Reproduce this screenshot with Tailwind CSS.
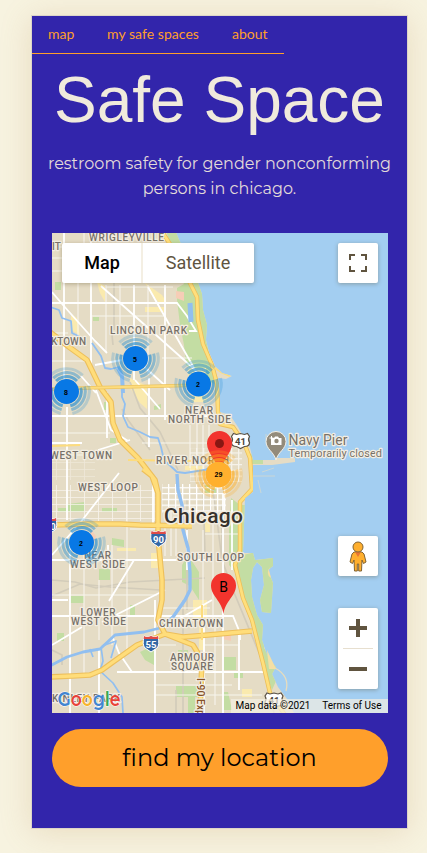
<!DOCTYPE html>
<html lang="en">
<head>
<meta charset="utf-8">
<meta name="viewport" content="width=device-width, initial-scale=1">
<title>Safe Space</title>
<script src="https://cdn.jsdelivr.net/npm/@tailwindcss/browser@4"></script>
</head>
<body class="h-[853px] overflow-hidden bg-[#f7f3e0] pl-8 pr-5 pt-4">
<main class="flex h-[812px] w-[375px] flex-col items-center bg-[#3225ab] shadow-[0_0_0_1px_#ddd5c8,0_3px_30px_rgba(190,140,80,0.24)]">
  <nav class="flex h-[38px] w-[252px] self-start whitespace-nowrap border-b border-[#ff9f2b] pl-4 font-['Lato',sans-serif] text-[14px] leading-[36px] text-[#ff9f2b]">
    <a class="w-[59px]">map</a><a class="w-[125px] tracking-[0.05px]">my safe spaces</a><a>about</a>
  </nav>
  <h1 class="mt-[9px] h-[73px] whitespace-nowrap font-['Liberation_Sans',sans-serif] text-[64px] leading-[74px] text-[#f0eadc]">Safe Space</h1>
  <p class="mt-[15px] h-[50px] whitespace-nowrap text-center font-['Montserrat','Inter',sans-serif] text-[16px] font-normal leading-[25px] text-[#e3dbd9]">restroom safety for gender nonconforming<br>persons in chicago.</p>

  <section class="relative mt-8 h-[480px] w-[336px] shrink-0 overflow-hidden bg-[#a3cef1]">
    <svg class="block h-[480px] w-[336px]" viewBox="52 233 336 480" font-family="Roboto, sans-serif">
      <defs>
        <path id="land" d="M50 230H175L180 242L190 258L197 280L202 294L203 310L207 325L206 340L209 352L215 366L222 373L232 376L226 379L218 378L220 395L220 412L230 415L238 427L244 438L250 448L253 460H275V458H295V462L272 465H253L253 492L245 498L243 553L253 553L255 560L273 558V566L268 570L273 583L271 613L262 612L260 600L264 585L262 567L257 562L253 568L251 580L252 597L257 615L263 625L262 640L266 652L270 660L276 667L272 674L278 687L287 699L294 713H50Z"/>
        <clipPath id="landclip"><use href="#land"/></clipPath>
        <pattern id="dense" width="7" height="5.8" patternUnits="userSpaceOnUse"><path d="M0 0H7M0 0V5.8" stroke="#fff" stroke-width="2.6" fill="none"/></pattern>
        <pattern id="fine" width="14" height="7" patternUnits="userSpaceOnUse"><path d="M0 0H14M0 0V7" stroke="#f7f3eb" stroke-width="1.7" fill="none"/></pattern>
        <g id="rings" fill="none" transform="rotate(-15)">
          <circle r="14.8" stroke-width="3" stroke-opacity=".68" pathLength="360" stroke-dasharray="90 30"/>
          <circle r="18.8" stroke-width="3" stroke-opacity=".46" pathLength="360" stroke-dasharray="90 30"/>
          <circle r="22.8" stroke-width="3" stroke-opacity=".24" pathLength="360" stroke-dasharray="90 30"/>
        </g>
        <g id="interstate">
          <path d="M-7-7Q-4-5 0-7Q4-5 7-7Q9 2 6 5Q3 7 0 9Q-3 7-6 5Q-9 2-7-7Z" fill="#3467a5" stroke="#fff" stroke-width="1"/>
          <path d="M-7-7Q-4-5 0-7Q4-5 7-7L7.4-4H-7.4Z" fill="#e04b47"/>
        </g>
        <path id="usshield" d="M-7-7L-4-6L0-7L4-6L7-7L9-4Q7-1 9 2Q9 6 4 6L0 8L-4 6Q-9 6-9 2Q-7-1-9-4Z" fill="#fff" stroke="#5a5145" stroke-width="1.2"/>
      </defs>
      <use href="#land" fill="#e5dcc5"/>
      <g clip-path="url(#landclip)">
        <g fill="#c3dda3">
          <path d="M166 230H176L190 258L203 294L208 325L206 340L212 365L217 386L206 379L186 365L184 345L180 325L177 300V288L184 284L174 260Z"/>
          <path d="M231 498L240 505H246L243 555L256 552L256 560L275 557V615H260L251 580L257 603L268 625L264 648L280 672L272 690L262 663L250 620L238 575L229 565V530Z"/>
          <path d="M182 565L188 555L199 572V600L190 586L182 582ZM205 485H216V493H205ZM224 657H236V670H224ZM228 692L232 710H224V692ZM178 650H188V662H178ZM176 686H203V697H176ZM188 697H195V713H188ZM234 672H243V678H234ZM247 455L263 452V464H252Z"/>
          <path d="M55 282H61V290H55ZM93 317H99V321H93ZM104 402H108V410H104ZM154 406L161 404V409L154 410ZM110 438H116V443H110ZM67 504L85 502V512H67ZM58 508H68V512H58ZM102 508H117V512H102ZM112 538L124 540V547L112 545ZM99 569H110V580H99ZM130 605H135V615H130ZM140 652L154 645V665L145 660ZM70 596H84V603H70ZM57 633H64V641H57Z"/>
        </g>
        <g fill="#faeaae">
          <path d="M71 314L77 318L80 335L71 330ZM97 282L105 286V302L100 293ZM145 283L162 295L167 303L160 304L149 290ZM130 378L147 386V409L140 403L130 388ZM145 307H164V312H145ZM188 368H206V376H188ZM192 396H207V402H192ZM72 540H81V543H72ZM117 548H136V551H117ZM151 553H160V568H151ZM193 600H207V618H193ZM242 689H252V697H242ZM199 623H204V650H199ZM204 512H210V532H204ZM188 660H199V667H188ZM185 466H203V470H185Z"/>
        </g>
        <g fill="#f6cdb6"><path d="M176 291L184 292V301L176 298ZM223 633L231 630V641L223 639ZM92 531L96 536L94 543L89 536Z"/></g>
        <g stroke="#d3ccba" fill="none" stroke-width="1.7">
          <path d="M112 335L113 345M130 382L140 408L160 432L178 470M122 409L128 420L150 450M210 470L217 520L222 560L233 590L262 660L274 713M52 580L75 582L96 588L130 582L205 578M52 596L80 584L110 587L160 590M222 505V560M203 483L205 555M52 650L62 655V665M183 600V713M176 690V713M114 245V330M187 500V610"/>
        </g>
        <path d="M52 485H157V521H52Z" fill="url(#fine)"/>
        <path d="M52 460H95V480H52Z" fill="url(#fine)" opacity=".5"/>
        <path d="M162 484H226V513H162Z" fill="url(#dense)"/>
        <path d="M190 448H242V482H190Z" fill="url(#dense)" opacity=".65"/>
        <g stroke="#f8f5ed" fill="none" stroke-width="1.1">
          <path d="M52 247H88M52 258H66M52 271H66M106 287H173M92 316H165M52 333H68M52 361H85M162 358H192M52 433H110M142 443H212M52 455H100M130 529H156M205 534H240M52 595H157M162 608H210M157 645H176M204 645H238M155 685H232M155 695H262"/>
          <path d="M84 233V280M78 258V345M106 285V352M120 285V332M148 285V375M84 530V675M99 580V640M112 545V645M127 500V650M165 528V556M171 508V556M176 528V556M190 425V468M197 422V470M203 425V470M209 425V470M203 530V630M213 500V620M215 620V705"/>
        </g>
        <g stroke="#fff" fill="none" stroke-width="1.8">
          <path d="M64 233V385M91 233V370M134 285V380M67 407V520M70 545V713M99 650V713M107 392V438M108 545V560M149 378L149 447M153 480V525M155 600V713M165 285V420M187 530V570M204 625V713M223 493V713M232 500V570M239 633V690"/>
          <path d="M52 303H177L187 316L196 331H189M52 416H221M52 560H205M52 616H157M157 616H233L240 633V640M117 672H263"/>
          <path d="M52 292L63 305L95 341L107 353M101 286L183 359L195 370L205 385M148 287L194 368M135 380L160 409M130 354L170 390M96 390L111 430L128 441M98 450L130 440M52 443H82M95 365L122 360M119 473L80 523L52 555M134 560L109 601M52 600H68M52 645L82 627M102 622L165 590M162 629L212 600M113 638L119 653L132 672M81 376L96 393"/>
        </g>
        <g stroke="#91bff0" fill="none" stroke-width="1.8" stroke-linejoin="round">
          <path d="M50 307L59 310L62 318L71 321L72 333L80 337M92 343L101 356L105 368L111 369L119 367L122 380V397L125 404L123 416L128 427L140 432L150 437L158 438L161 447L164 460L177 472L185 473L204 470L225 468"/>
          <path stroke-width="4" d="M118 368L122 376L123 393M206 470L225 468"/>
          <path stroke-width="3.4" d="M177 474L178 490L182 505L183 530L188 548L190 573L190 590L185 600L173 617L160 628"/>
          <path stroke-width="2.8" d="M160 628L144 632L115 635L100 649L83 652L67 657L50 666"/>
          <path stroke-width="1.7" d="M101 647L103 661L100 671L113 683L122 697L123 713M102 646L116 641L111 658M90 649L93 657"/>
          <path stroke-width="5" d="M190 303L191 322"/>
        </g>
        <g stroke-linejoin="round" fill="none">
          <path stroke="#edbf5b" stroke-width="5.6" d="M50 332L69 347L87 360L100 387L111 402L113 423L120 440L138 458L155 480L158 493V537L162 580V600L158 620L165 634L183 637L208 635L252 631M50 677L72 676L90 675L102 670L113 662L137 645L165 634L193 645L202 660L200 713M50 525L90 524L120 524L140 525L192 526M143 469L152 476L158 493"/>
          <path stroke="#ffdd7a" stroke-width="3.4" d="M50 332L69 347L87 360L100 387L111 402L113 423L120 440L138 458L155 480L158 493V537L162 580V600L158 620L165 634L183 637L208 635L252 631M50 677L72 676L90 675L102 670L113 662L137 645L165 634L193 645L202 660L200 713M50 525L90 524L120 524L140 525L192 526M143 469L152 476L158 493"/>
          <path stroke="#edbf5b" stroke-width="4.4" d="M163 233L178 257L190 283L197 297L198 320L203 344L212 365L217 384L218 411L220 424L233 427L244 443L250 458L252 489L240 502L240 550L235 565L243 598L252 620L263 663L270 693L285 715"/>
          <path stroke="#ffdf7c" stroke-width="2.8" d="M163 233L178 257L190 283L197 297L198 320L203 344L212 365L217 384L218 411L220 424L233 427L244 443L250 458L252 489L240 502L240 550L235 565L243 598L252 620L263 663L270 693L285 715"/>
          <path stroke="#edc45f" stroke-width="3.6" d="M52 389L84 388L203 385"/>
          <path stroke="#fddc7d" stroke-width="2" d="M52 389L84 388L203 385M202 605V640M128 460L194 461M212 366L221 372L230 376M52 446L80 445"/>
        </g>
      </g>
      <path d="M275 668Q290 676 286 691" fill="none" stroke="#e7dcbd" stroke-width="1.3"/>
      <path d="M267 650L276 669H269ZM270 567Q265 574 271 578L269 570Z" fill="#f4dfa4"/>
      <path d="M253 476H275M258 480L261 493M262 472L274 468M266 434V440" stroke="#d4d9cf" stroke-width=".8"/>

      <g fill="#777169" stroke="#f3ede1" stroke-width="2.4" stroke-linejoin="round" paint-order="stroke" font-size="10" font-weight="500">
        <text x="89" y="241" textLength="75">WRIGLEYVILLE</text>
        <text x="52" y="250">IT</text>
        <text x="110" y="334" textLength="77">LINCOLN PARK</text>
        <text x="51" y="344.500" textLength="35">KTOWN</text>
        <text x="185" y="413.500" textLength="28">NEAR</text>
        <text x="168" y="423" textLength="63">NORTH SIDE</text>
        <text x="50" y="458.500" textLength="62">WEST TOWN</text>
        <text x="156" y="463.500" textLength="73">RIVER NORTH</text>
        <text x="78" y="490.500" textLength="60">WEST LOOP</text>
        <text x="84" y="558.500" textLength="27">NEAR</text>
        <text x="70" y="568" textLength="55">WEST SIDE</text>
        <text x="177" y="561" textLength="67">SOUTH LOOP</text>
        <text x="80.500" y="615.500" textLength="35">LOWER</text>
        <text x="71" y="625" textLength="55">WEST SIDE</text>
        <text x="159" y="626.500" textLength="64">CHINATOWN</text>
        <text x="170" y="660.500" textLength="44">ARMOUR</text>
        <text x="171" y="670" textLength="42">SQUARE</text>
        <text x="52" y="701.500" textLength="68">KINLEY PARK</text>
        <text x="288.500" y="445" font-size="14" font-weight="400" textLength="59">Navy Pier</text>
        <text x="288.500" y="457" font-size="11" font-weight="400" textLength="93.500">Temporarily closed</text>
        <text x="164" y="523" font-size="21" fill="#37322d" stroke-width="3" textLength="79">Chicago</text>
        <text transform="translate(197 678) rotate(90)" font-size="10.500" fill="#855125" textLength="43">I-90 Expy</text>
      </g>
      <g font-weight="700" text-anchor="middle">
        <use href="#interstate" x="158.500" y="538"/><text x="158.500" y="542.500" fill="#fff" font-size="9.500">90</text>
        <use href="#interstate" x="151" y="643"/><text x="151" y="647.500" fill="#fff" font-size="9.500">55</text>
        <use href="#interstate" x="49" y="525"/><text x="53" y="530" fill="#fff" font-size="9.500">0</text>
        <use href="#usshield" x="240.500" y="440.500"/><text x="240.500" y="444.500" fill="#4c4439" font-size="9.500">41</text>
        <use href="#usshield" x="274" y="700"/><text x="274" y="704" fill="#4c4439" font-size="9.500">41</text>
      </g>
      <path d="M276 460C274 452 266 449 266 441.500A10 10 0 0 1 286 441.500C286 449 278 452 276 460Z" fill="#938b7b" stroke="#f5f0e5" stroke-width="1"/>
      <path d="M271 438H274L275 436.500H278L279 438H281.500V445H271Z" fill="#fff"/><circle cx="276.500" cy="441" r="2.200" fill="#938b7b"/><path d="M269.500 438H273.500M271.500 436V440" stroke="#fff"/>

      <g stroke="#268ed1">
        <use href="#rings" transform="translate(135.500 358.500)"/>
        <use href="#rings" transform="translate(66.500 391.500)"/>
        <use href="#rings" transform="translate(198.500 384)"/>
        <use href="#rings" transform="translate(81.500 542.500)"/>
      </g>
      <g fill="#0878e5"><circle cx="135.500" cy="358.500" r="12.500"/><circle cx="66.500" cy="391.500" r="12.500"/><circle cx="198.500" cy="384" r="12.500"/><circle cx="81.500" cy="542.500" r="12.500"/></g>
      <path d="M219.500 473C218 461 207 454 207 443.500A12.500 12.500 0 0 1 232 443.500C232 454 221 461 219.500 473Z" fill="#f2342d"/>
      <circle cx="219.500" cy="443.500" r="4.500" fill="#891713"/>
      <use href="#rings" stroke="#ffad1f" transform="translate(218.500 474.500)"/>
      <circle cx="218.500" cy="474.500" r="13" fill="#ffb02e"/>
      <g font-family="Liberation Sans, sans-serif" font-weight="700" font-size="7" text-anchor="middle" fill="#000">
        <text x="135" y="362">5</text><text x="66" y="395">8</text><text x="198" y="387">2</text><text x="81" y="546">2</text><text x="218.500" y="477">29</text>
      </g>
      <path d="M223.500 614C222 601 211 596 211 585.500A12.500 12.500 0 0 1 236 585.500C236 596 225 601 223.500 614Z" fill="#f2342d"/>
      <text x="223.500" y="592" font-size="14" text-anchor="middle">B</text>
      <text x="57.500" y="706" textLength="63" lengthAdjust="spacingAndGlyphs" font-family="Montserrat, Inter, sans-serif" font-size="20" font-weight="600" stroke="#fff" stroke-width="1" stroke-linejoin="round" paint-order="stroke"><tspan fill="#4285d0">G</tspan><tspan fill="#e84338">o</tspan><tspan fill="#f7b52c">o</tspan><tspan fill="#4285d0">g</tspan><tspan fill="#35a853">l</tspan><tspan fill="#e84338">e</tspan></text>
    </svg>

    <div class="absolute left-[10px] top-[10px] flex h-10 w-[192px] overflow-hidden rounded-[2px] bg-white text-center font-['Roboto',sans-serif] text-[18px] leading-[40px] shadow-[0_1px_4px_rgba(80,65,25,0.35)]">
      <button class="w-[81px] border-r-2 border-[#f4efe3] pl-[2px] font-medium text-black">Map</button><button class="w-[111px] text-[#60543f]">Satellite</button>
    </div>
    <button class="absolute right-[10px] top-[10px] grid h-10 w-10 place-items-center rounded-[2px] bg-white shadow-[0_1px_4px_rgba(80,65,25,0.35)]">
      <svg class="size-[18px]" viewBox="0 0 18 18" fill="none" stroke="#60543f" stroke-width="2"><path d="M1 6V1H6M12 1H17V6M17 12V17H12M6 17H1V12"/></svg>
    </button>
    <button class="absolute right-[10px] top-[303px] grid h-10 w-10 place-items-center rounded-[2px] bg-white shadow-[0_1px_4px_rgba(80,65,25,0.35)]">
      <svg class="h-[31px] w-[18px]" viewBox="0 0 18 31" fill="#ffaf2e" stroke="#806333" stroke-width="1"><path d="M5 11H13L15 13L17 21L14.500 22.500L13 19L12.500 30H9.700V23H8.300V30H5.500L5 19L3.500 22.500L1 21L3 13Z"/><path d="M6 11H12L9 16Z" fill="#e87532" stroke="none"/><circle cx="9" cy="6" r="5"/></svg>
    </button>
    <div class="absolute right-[10px] top-[375px] flex h-[81px] w-10 flex-col items-center rounded-[2px] bg-white shadow-[0_1px_4px_rgba(80,65,25,0.35)]">
      <button class="grid h-10 w-10 place-items-center"><svg class="size-[18px]" viewBox="0 0 18 18" fill="#60543f"><path d="M7 0h4v7h7v4h-7v7H7v-7H0V7h7Z"/></svg></button>
      <div class="h-px w-[30px] bg-[#e7dfcf]"></div>
      <button class="grid h-10 w-10 place-items-center"><svg class="size-[18px]" viewBox="0 0 18 18" fill="#60543f"><path d="M0 7h18v4H0Z"/></svg></button>
    </div>
    <div class="absolute bottom-0 right-0 flex h-[14px] w-[157px] justify-between whitespace-nowrap bg-[#f4efe2]/70 pl-[5px] pr-[6px] font-['Roboto',sans-serif] text-[10px] leading-[14px] text-black"><span>Map data ©2021</span><span>Terms of Use</span></div>
  </section>

  <button class="mt-4 h-[58px] w-[336px] shrink-0 rounded-full bg-[#ff9f2b] font-['Montserrat','Inter',sans-serif] text-[24px] font-normal leading-[58px] text-black">find my location</button>
</main>
</body>
</html>
